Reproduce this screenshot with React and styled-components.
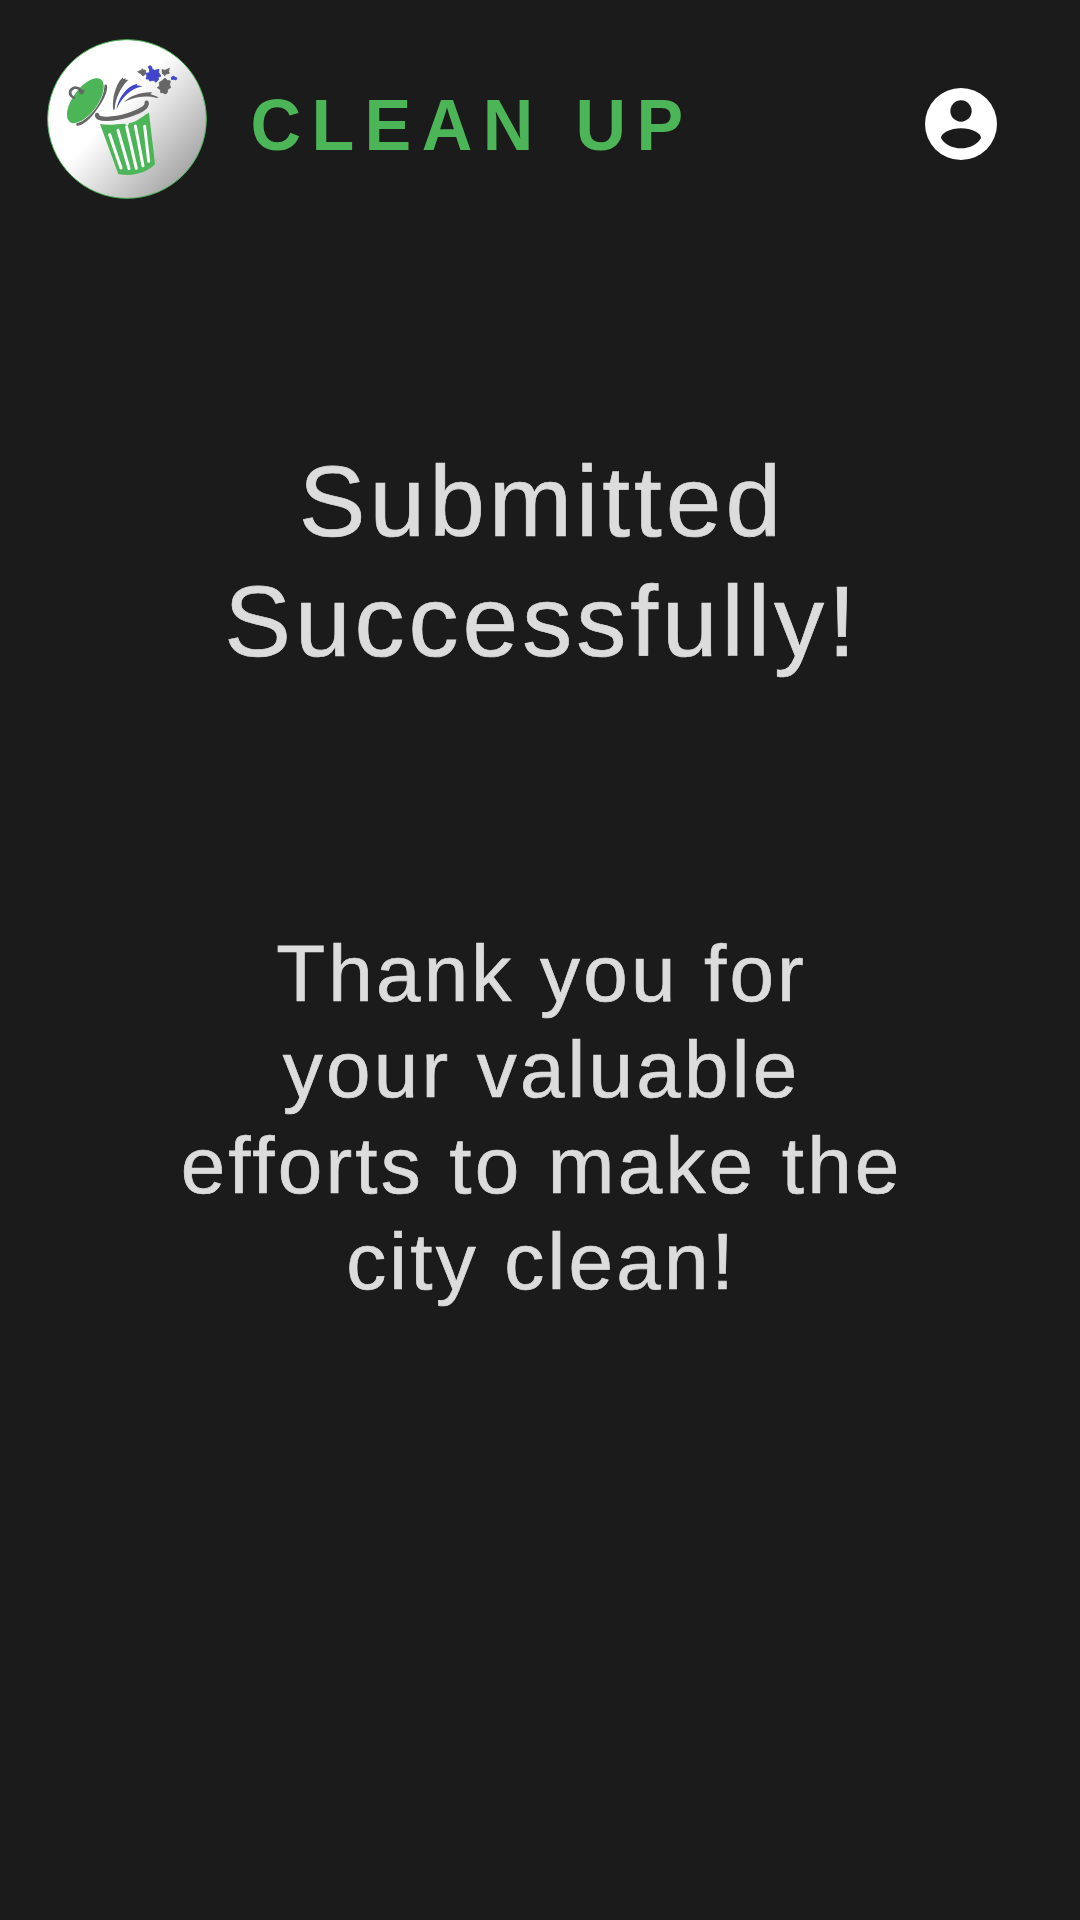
import React from "react";
import styled, { createGlobalStyle } from "styled-components";

const GlobalStyle = createGlobalStyle`
  body {
    margin: 0;
    background: #1b1b1b;
  }
`;

const Screen = styled.main`
  box-sizing: border-box;
  display: flex;
  flex-direction: column;
  align-items: center;
  width: 1080px;
  height: 1920px;
  overflow: hidden;
  background: #1b1b1b;
  color: #dcdcdc;
  font-family: "Liberation Sans", Arial, sans-serif;
`;

const Header = styled.header`
  box-sizing: border-box;
  display: flex;
  align-items: center;
  width: 100%;
  height: 238px;
  padding: 0 83px 0 47px;
`;

const Logo = styled.svg`
  flex: none;
  width: 160px;
  height: 160px;
`;

const Brand = styled.h1`
  flex: 1;
  margin: 12px 0 0 43.5px;
  color: #4cb558;
  font-size: 70px;
  font-weight: 700;
  line-height: 84px;
  letter-spacing: 10.4px;
  word-spacing: 2px;
  white-space: nowrap;
  transform: scaleY(1.045);
`;

const Account = styled.svg`
  flex: none;
  width: 72px;
  height: 72px;
  margin-top: 10px;
`;

const Message = styled.p`
  margin: ${(p) => p.$top}px 0 0;
  padding-left: ${(p) => p.$size * 0.04}px;
  font-size: ${(p) => p.$size}px;
  line-height: 1.2;
  letter-spacing: 0.04em;
  text-align: center;
  white-space: pre-line;
  -webkit-text-stroke: 0.7px currentColor;
`;

function CleanUpLogo() {
  return (
    <Logo viewBox="21 27 480 480" aria-label="Clean Up">
      <defs>
        <linearGradient id="disc" x1="0.15" y1="0.12" x2="0.9" y2="0.8">
          <stop offset="0" stopColor="#fff" />
          <stop offset="0.42" stopColor="#fff" />
          <stop offset="1" stopColor="#a9a9a9" />
        </linearGradient>
      </defs>
      <circle cx="261" cy="267" r="238" fill="url(#disc)" stroke="#4cb558" strokeWidth="3" />
      <g fill="none" stroke="#666" strokeLinecap="round">
        <path d="M197 168C198 188 178 223 155 252C141 269 127 280 113 283" strokeWidth="9" />
        <path d="M105 204C89 199 85 184 97 176C108 169 122 175 124 187" strokeWidth="7" />
        <path d="M171 255C172 272 222 268 263 256C300 245 323 230 320 218" strokeWidth="13" />
      </g>
      <ellipse cx="136" cy="212" rx="79" ry="37" transform="rotate(-54 136 212)" fill="#4cb558" stroke="#fff" strokeWidth="3" paintOrder="stroke" />
      <path d="M105 204C89 199 85 184 97 176C108 169 122 175 124 187" fill="none" stroke="#666" strokeWidth="7" />
      <path d="M115 179L134 179L131 190L124 194L118 188Z" fill="#666" />
      <path
        d="M180 282C205 287 232 282 253 281L263 288L268 279C292 276 306 258 327 248L345 403C318 430 275 440 235 432Z"
        fill="#4cb558"
      />
      <g stroke="#fff" strokeWidth="9" strokeLinecap="round">
        <path d="M209 314L243 414" />
        <path d="M234 301L267 416" />
        <path d="M260 291L289 415" />
        <path d="M286 288L309 407" />
        <path d="M314 289L326 394" />
      </g>
      <path d="M220 241C215 211 225 165 247 143L250 147L257 144L256 149L265 149C242 172 226 204 224 238Z" fill="#666" />
      <path d="M229 239C235 203 260 168 292 161L290 166L308 169C268 177 246 203 229 239Z" fill="#4046cc" />
      <path d="M252 216C270 197 306 185 337 187L331 192L356 202L350 204C313 194 281 202 252 216Z" fill="#666" />
      <g fill="#666" stroke="#666" strokeWidth="2.5" strokeLinejoin="round">
        <path d="M293 125L304 121L307 116L310 120L317 121L317 132L309 138L302 131Z" />
        <path d="M366 119L375 121L388 115L386 124L388 130L379 132L374 137L371 133L367 131Z" />
        <path d="M358 157L365 153L375 144L382 151L391 153L389 164L392 173L384 177L381 189L375 192L369 188L362 188L361 179L352 173L359 168Z" />
      </g>
      <g fill="#4046cc" stroke="#4046cc" strokeWidth="2.5" strokeLinejoin="round">
        <path d="M325 110L330 107L335 110L336 117L344 121L357 118L356 128L363 138L355 142L355 150L347 157L342 151L329 153L326 147L318 147L321 138L318 130L328 128L329 120Z" />
        <path d="M394 142L401 138L404 141L411 144L408 150L401 148L395 149Z" />
      </g>
    </Logo>
  );
}

function AccountIcon() {
  return (
    <Account viewBox="75 53 216 216" aria-label="Account">
      <circle cx="183" cy="161" r="108" fill="#fff" />
      <circle cx="183" cy="122" r="32" fill="#1b1b1b" />
      <path d="M183 174C214 174 243 188 243 203C233 222 210 234 183 234C156 234 133 222 123 203C123 188 152 174 183 174Z" fill="#1b1b1b" />
    </Account>
  );
}

export default function App() {
  return (
    <>
      <GlobalStyle />
      <Screen>
        <Header>
          <CleanUpLogo />
          <Brand>CLEAN UP</Brand>
          <AccountIcon />
        </Header>
        <Message $top={203} $size={100}>{"Submitted\nSuccessfully!"}</Message>
        <Message $top={245} $size={80}>
          {"Thank you for\nyour valuable\nefforts to make the\ncity clean!"}
        </Message>
      </Screen>
    </>
  );
}
